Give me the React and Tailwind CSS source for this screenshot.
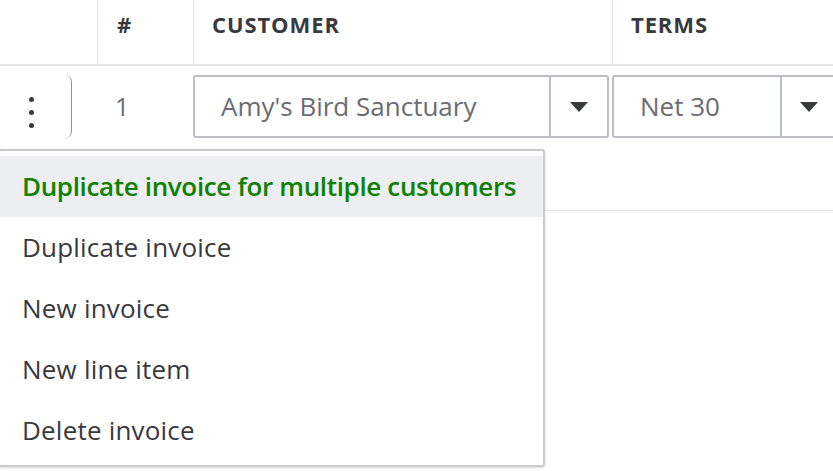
const menuItems = [
  "Duplicate invoice for multiple customers",
  "Duplicate invoice",
  "New invoice",
  "New line item",
  "Delete invoice",
]

const Caret = () => (
  <svg width="18" height="10" viewBox="0 0 18 10">
    <path d="M0 0 L18 0 L9 10 Z" fill="#393a3d" />
  </svg>
)

const App = () => {
  return (
    <div className="relative w-[833px] h-[471px] overflow-hidden bg-white font-['Open_Sans',sans-serif] text-[#393a3d]">
      {/* header */}
      <div className="flex h-[66px] border-b-2 border-[#e3e5e8]">
        <div className="w-[97px] shrink-0" />
        <div className="w-[96px] shrink-0 border-l border-[#dbe3ef] pl-[19px] pt-[13px] text-[22px] leading-none font-bold">#</div>
        <div className="w-[419px] shrink-0 border-l border-[#dbe3ef] pl-[18px] pt-[13px] text-[22px] leading-none font-bold tracking-[0.9px]">CUSTOMER</div>
        <div className="flex-1 border-l border-[#dbe3ef] pl-[18px] pt-[13px] text-[22px] leading-none font-bold tracking-[0.9px]">TERMS</div>
      </div>

      {/* row */}
      <div className="flex items-start h-[145px] pt-[9px] border-b border-[#e3e5e8]">
        <div className="w-[72px] h-[63px] shrink-0 border-r border-[#8d9096] rounded-r-[7px] flex flex-col items-start justify-center gap-[8px] pl-[29px] pt-[12px]">
          <span className="w-[5px] h-[5px] rounded-full bg-[#393a3d]" />
          <span className="w-[5px] h-[5px] rounded-full bg-[#393a3d]" />
          <span className="w-[5px] h-[5px] rounded-full bg-[#393a3d]" />
        </div>
        <div className="w-[25px] shrink-0" />
        <div className="w-[96px] h-[63px] shrink-0 pl-[18px] flex items-center text-[25px] text-[#6b6c72]">1</div>
        <div className="flex shrink-0 w-[416px] h-[63px] border-2 border-[#babec5] rounded-[3px]">
          <div className="flex-1 pl-[26px] flex items-center text-[26px] text-[#6b6c72]">Amy's Bird Sanctuary</div>
          <div className="w-[58px] border-l-2 border-[#babec5] flex items-center justify-center">
            <Caret />
          </div>
        </div>
        <div className="w-[3px] shrink-0" />
        <div className="flex shrink-0 w-[228px] h-[63px] border-2 border-[#babec5] rounded-[3px]">
          <div className="w-[166px] pl-[26px] flex items-center text-[26px] text-[#6b6c72]">Net 30</div>
          <div className="flex-1 border-l-2 border-[#babec5] flex items-center justify-center pr-[2px]">
            <Caret />
          </div>
        </div>
      </div>

      {/* context menu */}
      <div className="absolute left-[-2px] top-[149px] w-[547px] h-[318px] bg-white border-2 border-[#c9cbcf] rounded-[3px] shadow-[0_1px_3px_rgba(0,0,0,0.15)] py-[5px]">
        {menuItems.map((item, i) => (
          <div
            key={item}
            className={
              i === 0
                ? "h-[61px] flex items-center pl-[22px] text-[26px] bg-[#eceef1] text-[#108000] font-semibold tracking-[-0.35px]"
                : "h-[61px] flex items-center pl-[22px] text-[26px] text-[#393a3d] tracking-[0.2px]"
            }
          >
            {item}
          </div>
        ))}
      </div>
    </div>
  )
}

export default App
